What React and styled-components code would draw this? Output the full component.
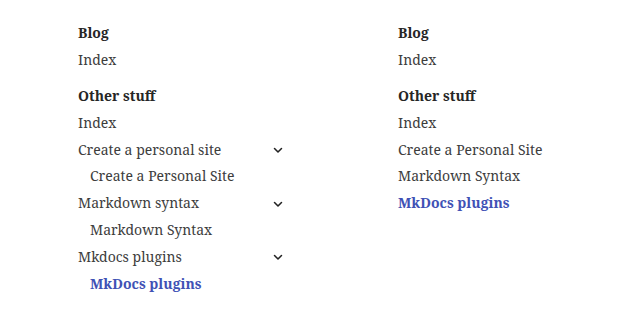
import React from "react";
import styled, { createGlobalStyle } from "styled-components";

const Global = createGlobalStyle`
  html, body { margin: 0; padding: 0; background: #fff; }
  body { font-family: "Noto Serif", "DejaVu Serif", serif; }
`;

const Page = styled.div`
  display: grid;
  grid-template-columns: 320px 320px;
  width: 640px;
  height: 323px;
`;

const Panel = styled.nav`
  padding: 20px 35px 0 78px;
  font-size: 14px;
  color: #333;
`;

const Section = styled.div`
  display: flex;
  flex-direction: column;
  margin-bottom: 10px;
`;

const Title = styled.div`
  font-weight: 700;
  line-height: 25px;
  padding-bottom: 1.5px;
  color: #262626;
`;

const Row = styled.div`
  display: flex;
  align-items: center;
  justify-content: space-between;
  line-height: 26.8px;
  padding-left: ${(p) => (p.$nested ? "12px" : "0")};
  color: ${(p) => (p.$active ? "#4051b5" : "#3d3d3d")};
  font-weight: ${(p) => (p.$active ? 700 : 400)};
`;

const Chevron = () => (
  <svg width="14" height="14" viewBox="0 0 24 24" fill="none" stroke="#222" strokeWidth="2.6" strokeLinecap="round" strokeLinejoin="round">
    <path d="M6 9.5l6 6 6-6" />
  </svg>
);

export default function App() {
  return (
    <>
      <Global />
      <Page>
        <Panel>
          <Section>
            <Title>Blog</Title>
            <Row>Index</Row>
          </Section>
          <Section>
            <Title>Other stuff</Title>
            <Row>Index</Row>
            <Row>Create a personal site<Chevron /></Row>
            <Row $nested>Create a Personal Site</Row>
            <Row>Markdown syntax<Chevron /></Row>
            <Row $nested>Markdown Syntax</Row>
            <Row>Mkdocs plugins<Chevron /></Row>
            <Row $nested $active>MkDocs plugins</Row>
          </Section>
        </Panel>
        <Panel>
          <Section>
            <Title>Blog</Title>
            <Row>Index</Row>
          </Section>
          <Section>
            <Title>Other stuff</Title>
            <Row>Index</Row>
            <Row>Create a Personal Site</Row>
            <Row>Markdown Syntax</Row>
            <Row $active>MkDocs plugins</Row>
          </Section>
        </Panel>
      </Page>
    </>
  );
}
